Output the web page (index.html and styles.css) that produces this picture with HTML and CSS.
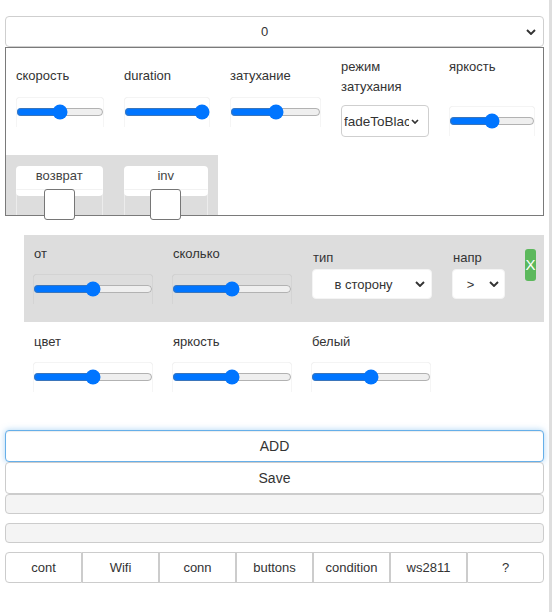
FILE: index.html
```html
<!DOCTYPE html>
<html lang="ru">
<head>
<meta charset="utf-8">
<title>Effects</title>
<link rel="stylesheet" href="styles.css">
</head>
<body>
<div class="page">
  <div class="select select-main">
    <span class="select-text">0</span>
    <svg class="chev" width="10" height="6" viewBox="0 0 10 6"><path d="M1 1l4 4 4-4" fill="none" stroke="#333" stroke-width="1.9"/></svg>
  </div>

  <div class="effect">
    <div class="params">
      <div class="param param-mid w88">
        <div class="lbl">скорость</div>
        <div class="range-box"><input type="range" min="0" max="100" value="50"></div>
      </div>
      <div class="param param-mid w86">
        <div class="lbl">duration</div>
        <div class="range-box"><input type="range" min="0" max="100" value="100"></div>
      </div>
      <div class="param param-mid w91">
        <div class="lbl">затухание</div>
        <div class="range-box"><input type="range" min="0" max="100" value="50"></div>
      </div>
      <div class="param param-top w88">
        <div class="lbl">режим<br>затухания</div>
        <div class="select select-mode">
          <span class="select-text">fadeToBlack</span>
          <svg class="chev chev-sm" width="8" height="5" viewBox="0 0 8 5"><path d="M1 1l3 3 3-3" fill="none" stroke="#333" stroke-width="1.7"/></svg>
        </div>
      </div>
      <div class="param param-end w86">
        <div class="lbl">яркость</div>
        <div class="range-box"><input type="range" min="0" max="100" value="50"></div>
      </div>
    </div>
    <div class="toggles">
      <div class="tog w87">
        <div class="tog-label">возврат</div>
        <div class="tog-check"><input type="checkbox"></div>
      </div>
      <div class="tog w85">
        <div class="tog-label">inv</div>
        <div class="tog-check"><input type="checkbox"></div>
      </div>
    </div>
  </div>

  <div class="entry">
    <div class="entry-head">
      <div class="eparam">
        <div class="lbl">от</div>
        <div class="range-box"><input type="range" min="0" max="100" value="50"></div>
      </div>
      <div class="eparam">
        <div class="lbl">сколько</div>
        <div class="range-box"><input type="range" min="0" max="100" value="50"></div>
      </div>
      <div class="eparam eparam-sel">
        <div class="lbl">тип</div>
        <div class="select select-type">
          <span class="select-text">в сторону</span>
          <svg class="chev" width="10" height="6" viewBox="0 0 10 6"><path d="M1 1l4 4 4-4" fill="none" stroke="#333" stroke-width="1.9"/></svg>
        </div>
      </div>
      <div class="eparam eparam-sel eparam-dir">
        <div class="lbl">напр</div>
        <div class="select select-dir">
          <span class="select-text">&gt;</span>
          <svg class="chev" width="10" height="6" viewBox="0 0 10 6"><path d="M1 1l4 4 4-4" fill="none" stroke="#333" stroke-width="1.9"/></svg>
        </div>
      </div>
      <button class="btn-x">X</button>
    </div>
    <div class="entry-body">
      <div class="eparam">
        <div class="lbl">цвет</div>
        <div class="range-box"><input type="range" min="0" max="100" value="50"></div>
      </div>
      <div class="eparam">
        <div class="lbl">яркость</div>
        <div class="range-box"><input type="range" min="0" max="100" value="50"></div>
      </div>
      <div class="eparam">
        <div class="lbl">белый</div>
        <div class="range-box"><input type="range" min="0" max="100" value="50"></div>
      </div>
    </div>
  </div>

  <button class="btn btn-focus">ADD</button>
  <button class="btn">Save</button>
  <div class="field"></div>
  <div class="field field-gap"></div>

  <div class="tabs">
    <button class="tab">cont</button>
    <button class="tab">Wifi</button>
    <button class="tab">conn</button>
    <button class="tab">buttons</button>
    <button class="tab">condition</button>
    <button class="tab">ws2811</button>
    <button class="tab">?</button>
  </div>
</div>
</body>
</html>
```

FILE: styles.css
```css
* { box-sizing: border-box; }

html, body { margin: 0; padding: 0; }

body {
  min-height: 100vh;
  background: #fff;
  border-right: 3px solid #dedede;
  font-family: "Liberation Sans", Arial, sans-serif;
  font-size: 13px;
  color: #333;
}

.page {
  width: 539px;
  margin-left: 5px;
  padding-top: 16px;
}

/* selects */
.select {
  display: flex;
  align-items: center;
  background: #fff;
  border: 1px solid #cfcfcf;
  border-radius: 4px;
  color: #333;
  white-space: nowrap;
  overflow: hidden;
}
.select-text {
  flex: 1;
  min-width: 0;
  overflow: hidden;
  text-align: center;
}
.chev { flex: none; display: block; }

.select-main {
  height: 31px;
  padding: 0 7px 0 1px;
}
.select-main .chev { margin-left: 4px; }

.select-mode {
  width: 88px;
  height: 32px;
  margin-top: 8px;
  padding: 0 9px 0 2px;
  font-size: 13.5px;
}
.select-mode .select-text { text-align: left; text-overflow: clip; }
.select-mode .chev { margin-left: 2px; }

.select-type {
  width: 120px;
  height: 30px;
  margin-top: 1px;
  border-color: #f4f4f4;
  padding: 0 6px 0 3px;
}
.select-type .chev { margin-left: 4px; }

.select-dir {
  width: 53px;
  height: 30px;
  margin-top: 1px;
  border-color: #f4f4f4;
  padding: 0 5px 0 3px;
}
.select-dir .chev { margin-left: 4px; }

/* effect box */
.effect {
  border: 1px solid #7a7a7a;
}
.params {
  display: flex;
  align-items: flex-start;
  gap: 20px;
  height: 89px;
  padding: 9px 0 0 10px;
}
.param { display: flex; flex-direction: column; }
.w85 { width: 85px; }
.w86 { width: 86px; }
.w87 { width: 87px; }
.w88 { width: 88px; }
.w91 { width: 91px; }

.param-mid { margin-top: 9px; }
.param-mid .range-box { margin-top: 11px; }
.param-end .range-box { margin-top: 29px; }

.lbl {
  line-height: 20px;
  color: #333;
}

.range-box {
  height: 30px;
  display: flex;
  align-items: center;
  border-radius: 4px 4px 0 0;
  box-shadow: inset 0 1px 0 rgba(0, 0, 0, 0.045), inset 1px 0 0 rgba(0, 0, 0, 0.04), inset -1px 0 0 rgba(0, 0, 0, 0.04);
}
.range-box input {
  width: 100%;
  margin: 0;
}

/* toggles */
.toggles {
  display: flex;
  gap: 21px;
  width: 212px;
  height: 60px;
  margin-top: 18px;
  padding: 11px 10px 0;
  background: #ddd;
}
.tog {
  height: 49px;
  display: flex;
  flex-direction: column;
}
.tog-label {
  height: 30px;
  background: #fff;
  border-radius: 4px;
  text-align: center;
  line-height: 20px;
  color: #444;
}
.tog-check {
  height: 26px;
  margin-top: -7px;
  display: flex;
  justify-content: center;
  border: 1px solid rgba(255, 255, 255, 0.45);
  border-top-color: rgba(0, 0, 0, 0.05);
  border-bottom: none;
}
.tog-check input {
  appearance: none;
  -webkit-appearance: none;
  width: 31px;
  height: 31px;
  margin: -1px 0 0;
  background: #fff;
  border: 1px solid #767676;
  border-radius: 3px;
  flex: none;
}

/* entry */
.entry {
  width: 520px;
  margin: 19px 0 0 19px;
}
.entry-head {
  display: flex;
  align-items: flex-start;
  height: 87px;
  padding: 9px 0 0 9px;
  gap: 19px;
  background: #ddd;
}
.entry-body {
  display: flex;
  align-items: flex-start;
  padding: 10px 0 0 9px;
  gap: 19px;
}
.eparam {
  width: 120px;
  display: flex;
  flex-direction: column;
}
.eparam .lbl { padding-left: 1px; }
.eparam .range-box { margin-top: 10px; }
.eparam-sel { margin-top: 4px; margin-left: 1px; }
.eparam-dir { width: 53px; }

.btn-x {
  width: 11px;
  height: 32px;
  margin: 5px 0 0 1px;
  padding: 0;
  border: none;
  border-radius: 3px;
  background: #5cb85c;
  color: #fff;
  font-family: "Liberation Sans", Arial, sans-serif;
  font-size: 15px;
  line-height: 32px;
  text-align: center;
  overflow: visible;
}

/* buttons */
.btn {
  display: block;
  width: 100%;
  height: 32px;
  padding: 0;
  background: #fff;
  border: 1px solid #ccc;
  border-radius: 4px;
  font-family: "Liberation Sans", Arial, sans-serif;
  font-size: 14px;
  color: #333;
  text-align: center;
}
.btn-focus {
  margin-top: 38px;
  border-color: #66afe9;
  box-shadow: inset 0 1px 1px rgba(0, 0, 0, 0.075), 0 0 6px rgba(102, 175, 233, 0.55);
}

.field {
  height: 20px;
  background: #f4f4f4;
  border: 1px solid #ccc;
  border-radius: 4px;
}
.field-gap { margin-top: 9px; }

.tabs {
  display: flex;
  height: 31px;
  margin-top: 9px;
}
.tab {
  flex: 1;
  padding: 0;
  background: #fff;
  border: 1px solid #ccc;
  font-family: "Liberation Sans", Arial, sans-serif;
  font-size: 13px;
  color: #333;
  border-radius: 0;
}
.tab:first-child { border-radius: 4px 0 0 4px; }
.tab:last-child { border-radius: 0 4px 4px 0; }
```
